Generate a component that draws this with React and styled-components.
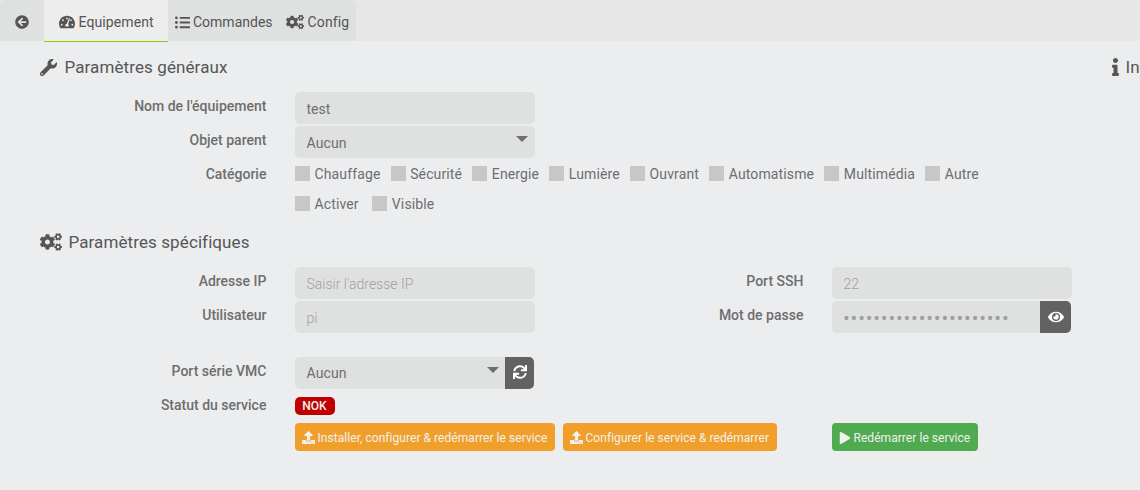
import React from "react";
import styled, { createGlobalStyle } from "styled-components";
import {
  FaArrowCircleLeft,
  FaTachometerAlt,
  FaListUl,
  FaCogs,
  FaWrench,
  FaInfo,
  FaEye,
  FaSync,
  FaUpload,
  FaPlay,
} from "react-icons/fa";

const GlobalStyle = createGlobalStyle`
  * { box-sizing: border-box; }
  body {
    margin: 0;
    overflow: hidden;
    background: #ecedef;
    color: #6e6e6e;
    font: 400 14px/20px Roboto, "Liberation Sans", sans-serif;
  }
  svg { display: block; flex: none; }
`;

const Page = styled.div`
  width: 1140px;
  height: 490px;
  overflow: hidden;
`;

const TabBar = styled.nav`
  height: 41px;
  display: flex;
  background: #e7e7e8;
`;

const TabGroup = styled.div`
  display: flex;
  width: 356px;
  background: #dfe1e0;
  border-radius: 5px 5px 0 0;
`;

const Tab = styled.a`
  display: flex;
  align-items: center;
  gap: ${(p) => p.$gap || 3}px;
  width: ${(p) => p.$width}px;
  height: 41px;
  padding: 3px 0 0 ${(p) => p.$inset}px;
  color: #555;
  letter-spacing: ${(p) => p.$spacing || 0}px;
  white-space: nowrap;
  ${(p) => p.$active && "height: 42px; background: #ecedec; border-bottom: 1px solid #94ca02;"}
`;

const Heading = styled.h2`
  display: flex;
  align-items: center;
  gap: ${(p) => p.$gap || 6.5}px;
  margin: 0;
  font-size: 17px;
  font-weight: 400;
  line-height: 24px;
  letter-spacing: 0.1px;
  color: #565656;
  white-space: nowrap;
`;

const SideHeading = styled(Heading)`
  width: 28px;
`;

const InfoIcon = styled(FaInfo)`
  width: 7px;
  height: 18px;
`;

const HeadingRow = styled.div`
  display: flex;
  justify-content: space-between;
  padding: ${(p) => p.$pad};
`;

const Row = styled.div`
  display: grid;
  grid-template-columns: 267px 509px 260px;
  column-gap: 28px;
  height: ${(p) => p.$height || 34}px;
`;

const PairRow = styled(Row)`
  grid-template-columns: 267px 240px 241px 240px;
`;

const Label = styled.label`
  padding-right: 0.6px;
  text-align: right;
  font-weight: 500;
  line-height: 28px;
`;

const Field = styled.div`
  display: flex;
  width: ${(p) => p.$width || 240}px;
  height: 32px;
  border-radius: 5px;
  overflow: hidden;
  background: #dfe1e0;
`;

const Input = styled.input`
  flex: 1;
  min-width: 0;
  height: 32px;
  border: 0;
  outline: 0;
  padding: 1px 12px 0 11.5px;
  background: transparent;
  color: #6e6e6e;
  font: inherit;
  &::placeholder {
    color: #9f9f9f;
    opacity: 1;
    font-weight: 300;
  }
`;

const SecretInput = styled(Input)`
  padding-top: 2px;
  padding-left: 11px;
  font-size: 20px;
  letter-spacing: 0.82px;
  &::placeholder {
    font-weight: 400;
  }
`;

const Select = styled.div`
  flex: 1;
  display: flex;
  justify-content: space-between;
  padding: ${(p) => p.$top || 7}px ${(p) => p.$right || 7}px 0 11.5px;
  letter-spacing: 0.1px;
`;

const Caret = styled.span`
  width: 0;
  height: 0;
  margin-top: ${(p) => p.$drop || 3}px;
  border: 6px solid transparent;
  border-top-color: #6e6e6e;
  border-bottom: 0;
`;

const AddonButton = styled.button`
  display: flex;
  align-items: center;
  justify-content: center;
  width: ${(p) => p.$width}px;
  height: 32px;
  padding: 0 0 ${(p) => p.$lift || 0}px;
  border: 0;
  background: #626262;
  color: #fff;
`;

const Checks = styled.div`
  display: flex;
  gap: ${(p) => p.$gap}px;
  width: 720px;
  height: 28px;
  align-items: center;
  letter-spacing: 0.13px;
`;

const Check = styled.label`
  display: flex;
  align-items: center;
  gap: 4.5px;
`;

const Box = styled.span`
  width: 15px;
  height: 15px;
  margin-bottom: 1px;
  background: #c7c7c7;
`;

const Badge = styled.span`
  display: block;
  width: 40px;
  height: 18px;
  margin-top: 6px;
  padding-right: 1px;
  border-radius: 5px;
  background: #c00000;
  color: #f2f2f2;
  font-size: 12px;
  font-weight: 500;
  line-height: 18px;
  text-align: center;
`;

const Actions = styled.div`
  display: flex;
  gap: 8px;
`;

const Button = styled.button`
  display: flex;
  align-items: center;
  gap: 2.5px;
  width: ${(p) => p.$width}px;
  height: 28px;
  padding: 1px 0 0 7px;
  border: 0;
  border-radius: 4px;
  background: ${(p) => (p.$tone === "success" ? "#50aa50" : "#f0a02a")};
  color: #f0f0f0;
  font: 400 12px/18px Roboto, "Liberation Sans", sans-serif;
  letter-spacing: 0.05px;
  white-space: nowrap;
`;

const Spacer = styled.div`
  height: ${(p) => p.$height}px;
`;

const categories = ["Chauffage", "Sécurité", "Energie", "Lumière", "Ouvrant", "Automatisme", "Multimédia", "Autre"];

const CheckList = ({ items, gap }) => (
  <Checks $gap={gap}>
    {items.map((name) => (
      <Check key={name}>
        <Box />
        {name}
      </Check>
    ))}
  </Checks>
);

export default function App() {
  return (
    <Page>
      <GlobalStyle />
      <TabBar>
        <TabGroup>
          <Tab $width={44} $inset={15}><FaArrowCircleLeft size={14} /></Tab>
          <Tab $width={124} $inset={15} $gap={3.5} $spacing={0.1} $active><FaTachometerAlt size={16} />Equipement</Tab>
          <Tab $width={111} $inset={7}><FaListUl size={15} />Commandes</Tab>
          <Tab $width={77} $inset={7} $gap={3.6} $spacing={0.1}><FaCogs size={18} />Config</Tab>
        </TabGroup>
      </TabBar>

      <HeadingRow $pad="14px 0 13px 40px">
        <Heading $gap={7.5}><FaWrench size={17} />Paramètres généraux</Heading>
        <SideHeading $gap={6.5}><InfoIcon />In</SideHeading>
      </HeadingRow>
      <Row>
        <Label>Nom de l'équipement</Label>
        <Field><Input defaultValue="test" /></Field>
      </Row>
      <Row>
        <Label>Objet parent</Label>
        <Field><Select>Aucun<Caret /></Select></Field>
      </Row>
      <Row $height={30}>
        <Label>Catégorie</Label>
        <CheckList items={categories} gap={10.2} />
      </Row>
      <Row $height={28}>
        <span />
        <CheckList items={["Activer", "Visible"]} gap={13.6} />
      </Row>

      <HeadingRow $pad="12px 0 13px 40px">
        <Heading><FaCogs size={22} />Paramètres spécifiques</Heading>
      </HeadingRow>
      <PairRow>
        <Label>Adresse IP</Label>
        <Field><Input placeholder="Saisir l'adresse IP" /></Field>
        <Label>Port SSH</Label>
        <Field><Input placeholder="22" /></Field>
      </PairRow>
      <PairRow>
        <Label>Utilisateur</Label>
        <Field><Input placeholder="pi" /></Field>
        <Label>Mot de passe</Label>
        <Field $width={239}>
          <SecretInput placeholder={"•".repeat(22)} />
          <AddonButton $width={31}><FaEye size={16} /></AddonButton>
        </Field>
      </PairRow>
      <Spacer $height={22} />
      <Row>
        <Label>Port série VMC</Label>
        <Field $width={239}>
          <Select $top={6} $right={6}>Aucun<Caret $drop={4} /></Select>
          <AddonButton $width={29} $lift={2}><FaSync size={14} /></AddonButton>
        </Field>
      </Row>
      <Row $height={32}>
        <Label>Statut du service</Label>
        <Badge>NOK</Badge>
      </Row>
      <Row $height={28}>
        <span />
        <Actions>
          <Button $width={260}><FaUpload size={13} />Installer, configurer &amp; redémarrer le service</Button>
          <Button $width={214}><FaUpload size={13} />Configurer le service &amp; redémarrer</Button>
        </Actions>
        <Button $tone="success" $width={146}><FaPlay size={12} />Redémarrer le service</Button>
      </Row>
    </Page>
  );
}
